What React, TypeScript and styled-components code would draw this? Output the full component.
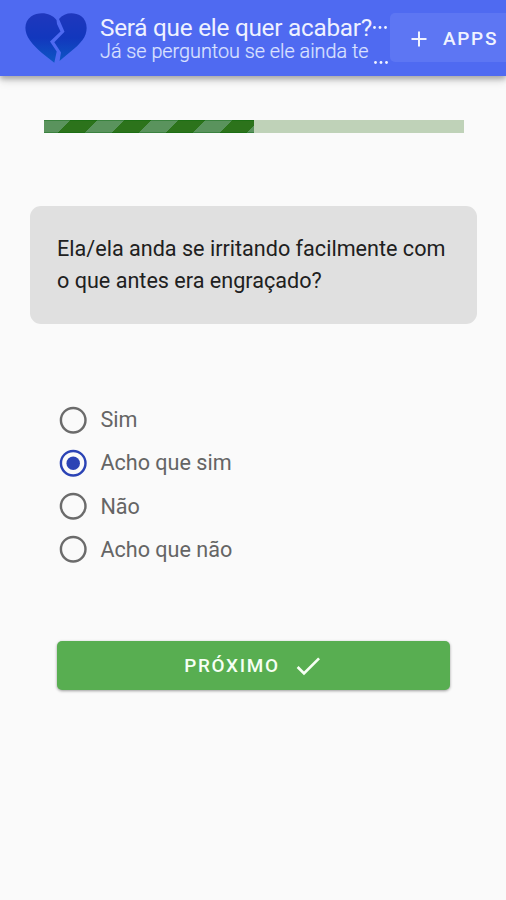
import React, { useState } from "react";
import styled, { createGlobalStyle } from "styled-components";

const GlobalStyle = createGlobalStyle`
  * { box-sizing: border-box; }
  body {
    margin: 0;
    background: #fafafa;
    font-family: Roboto, sans-serif;
    overflow: hidden;
  }
  button { font-family: inherit; }
`;

const Page = styled.div`
  height: 900px;
  display: flex;
  flex-direction: column;
  background: #fafafa;
  overflow: hidden;
`;

const AppBar = styled.header`
  height: 76px;
  flex: none;
  display: flex;
  align-items: flex-start;
  padding: 13px 0 0 24px;
  background: #4f6af1;
  box-shadow: 0 3px 5px rgba(0, 0, 0, 0.25), 0 5px 9px rgba(0, 0, 0, 0.12);
`;

const Heart = styled.svg`
  width: 64px;
  height: 50px;
  flex: none;
  display: block;
`;

const Titles = styled.div`
  width: 290px;
  height: 56px;
  margin-left: 12px;
  flex: none;
  white-space: nowrap;
`;

const Line = styled.div`
  display: flex;
`;

const Title = styled.span`
  font-size: 24.3px;
  line-height: 29px;
  letter-spacing: -0.25px;
  color: #eef1ff;
`;

const Subtitle = styled.span`
  font-size: 19.8px;
  line-height: 20px;
  font-weight: 300;
  color: #dce2ff;
  -webkit-text-stroke: 0.2px #dce2ff;
`;

const Ellipsis = styled.svg<{ $left: number; $top: number }>`
  width: 14px;
  height: 3px;
  flex: none;
  margin: ${(p) => p.$top}px 0 0 ${(p) => p.$left}px;
  fill: #f0f3ff;
`;

const AppsButton = styled.button`
  width: 130px;
  height: 49px;
  flex: none;
  display: flex;
  align-items: center;
  padding: 2px 0 0 20px;
  border: 0;
  border-radius: 5px;
  background: #5d76f3;
  color: #f0f3ff;
  font-size: 19px;
  font-weight: 500;
  letter-spacing: 1.7px;
`;

const PlusIcon = styled.svg`
  width: 18px;
  height: 18px;
  margin-right: 15px;
`;

const Track = styled.div`
  width: 420px;
  height: 13px;
  margin: 43.5px 0 0 44px;
  flex: none;
  background: #bfd2b8;
`;

const Progress = styled.div`
  height: 100%;
  background-color: #2c731b;
  background-image: linear-gradient(
    135deg,
    #5a935d 25%,
    transparent 0,
    transparent 50%,
    #5a935d 0,
    #5a935d 75%,
    transparent 0
  );
  background-size: 54px 54px;
  box-shadow: inset 0 1px 0 rgba(0, 100, 10, 0.35), inset 0 -1px 0 rgba(0, 100, 10, 0.35);
`;

const Question = styled.div`
  width: 447px;
  height: 118px;
  margin: 73.5px 0 0 30px;
  padding: 27px 27px 0;
  flex: none;
  border-radius: 11px;
  background: #e0e0e0;
  color: #202020;
  font-size: 21.6px;
  line-height: 32.4px;
  white-space: nowrap;
`;

const Options = styled.div`
  display: flex;
  flex-direction: column;
  margin: 74.2px 0 0 57px;
`;

const Option = styled.label`
  display: flex;
  align-items: center;
  height: 43.2px;
  color: #656565;
  font-size: 21.6px;
`;

const HiddenRadio = styled.input`
  appearance: none;
  width: 0;
  height: 0;
  margin: 0;
`;

const RadioIcon = styled.svg<{ $on: boolean }>`
  width: 32.4px;
  height: 32.4px;
  margin-right: 11px;
  color: ${(p) => (p.$on ? "#2b43b5" : "#6b6b6b")};
`;

const NextButton = styled.button`
  width: 393px;
  height: 49px;
  margin: 70px 0 0 57px;
  flex: none;
  display: flex;
  align-items: center;
  justify-content: center;
  padding: 1px 0 0 1px;
  border: 0;
  border-radius: 5px;
  background: #58ae51;
  color: #f6fff4;
  font-size: 18.9px;
  font-weight: 500;
  letter-spacing: 1.69px;
  box-shadow: 0 1px 3px rgba(0, 0, 0, 0.38);
`;

const CheckIcon = styled.svg`
  width: 32px;
  height: 32px;
  margin-left: 12px;
`;

const Dots = ({ left, top }: { left: number; top: number }) => (
  <Ellipsis $left={left} $top={top} viewBox="0 0 14 3" aria-hidden>
    <circle cx="1.5" cy="1.5" r="1.4" />
    <circle cx="7" cy="1.5" r="1.4" />
    <circle cx="12.5" cy="1.5" r="1.4" />
  </Ellipsis>
);

const answers = ["Sim", "Acho que sim", "Não", "Acho que não"];

export default function App() {
  const [selected, setSelected] = useState(1);
  return (
    <>
      <GlobalStyle />
      <Page>
        <AppBar>
          <Heart viewBox="0 0 64 50" aria-hidden>
            <defs>
              <linearGradient id="heartFill" gradientUnits="userSpaceOnUse" x1="0" y1="0" x2="0" y2="50">
                <stop offset="0" stopColor="#1f37bd" />
                <stop offset="0.5" stopColor="#1237bd" />
                <stop offset="1" stopColor="#0d58c4" />
              </linearGradient>
            </defs>
            <path
              fill="url(#heartFill)"
              d="M30.3 49.8C22 43 13 37 6 27.500C-1 18 .5 8 7 3.500C15-2 27-.5 32.500 7L33 11L36.500 18.500L26 28.500L32.700 38.500Z"
            />
            <path
              fill="url(#heartFill)"
              d="M35 6C40-.5 50-1.500 57 3C64 8 64.500 19 58.500 27C52 35.500 43 41 35.500 48L37 39.500L30.300 29.300L40.500 18.800Z"
            />
          </Heart>
          <Titles>
            <Line>
              <Title>Será que ele quer acabar?</Title>
              <Dots left={1} top={13} />
            </Line>
            <Line>
              <Subtitle>Já se perguntou se ele ainda te</Subtitle>
              <Dots left={6} top={19} />
            </Line>
          </Titles>
          <AppsButton>
            <PlusIcon viewBox="0 0 18 18" fill="none" stroke="currentColor" strokeWidth="2">
              <path d="M9 1.500V16.500M1.500 9H16.500" />
            </PlusIcon>
            APPS
          </AppsButton>
        </AppBar>
        <Track>
          <Progress style={{ width: "50%" }} />
        </Track>
        <Question>
          Ela/ela anda se irritando facilmente com
          <br />o que antes era engraçado?
        </Question>
        <Options role="radiogroup">
          {answers.map((answer, i) => (
            <Option key={answer}>
              <HiddenRadio
                type="radio"
                name="answer"
                checked={selected === i}
                onChange={() => setSelected(i)}
              />
              <RadioIcon $on={selected === i} viewBox="0 0 24 24" aria-hidden>
                <circle cx="12" cy="12" r="9.1" fill="none" stroke="currentColor" strokeWidth="1.8" />
                {selected === i && <circle cx="12" cy="12" r="5" fill="currentColor" />}
              </RadioIcon>
              {answer}
            </Option>
          ))}
        </Options>
        <NextButton>
          PRÓXIMO
          <CheckIcon viewBox="0 0 24 24" fill="currentColor">
            <path d="M21 7L9 19L3.500 13.500L4.910 12.090L9 16.170L19.590 5.590L21 7Z" />
          </CheckIcon>
        </NextButton>
      </Page>
    </>
  );
}
